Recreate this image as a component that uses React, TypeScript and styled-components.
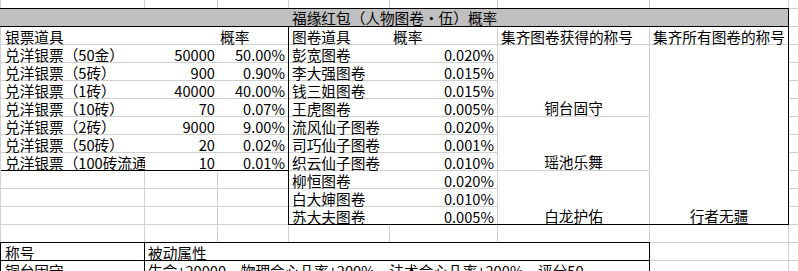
import styled, { createGlobalStyle } from 'styled-components'

const GRID = '#d0d0d0'
const INK = '#000'
const HEAD_FILL = '#c0c0c0'

// x positions of the sheet's vertical gridlines
const COLUMN_LINES = [0, 144, 217, 288, 389, 497, 649, 788]

const columnGradient =
  'linear-gradient(to right, ' +
  COLUMN_LINES.map((x, i) => {
    const next = COLUMN_LINES[i + 1]
    return `${GRID} ${x}px ${x + 1}px, transparent ${x + 1}px ${next !== undefined ? next + 'px' : '100%'}`
  }).join(', ') +
  ')'

const GlobalStyle = createGlobalStyle`
  html, body {
    margin: 0;
    padding: 0;
    background: #fff;
  }
  body {
    font-family: 'Noto Sans CJK SC', 'Noto Sans', sans-serif;
    font-size: 14.67px;
    color: ${INK};
  }
`

const Sheet = styled.div`
  display: grid;
  grid-template-columns: 145px 73px 71px 101px 108px 152px 139px 1fr;
  grid-template-rows: 9px repeat(15, 18px);
  width: 798px;
  height: 271px;
  overflow: hidden;
  background-color: #fff;
  background-image: ${columnGradient}, linear-gradient(to bottom, ${GRID} 0 1px, transparent 1px);
  background-size: 100% 100%, 100% 18px;
  background-position: 0 0, 0 8px;
  background-repeat: no-repeat, repeat-y;
`

const Text = styled.span`
  display: block;
  line-height: 17px;
  padding: 1px 3px 0;
  white-space: nowrap;
`

const Num = styled(Text)`
  text-align: right;
  padding: 1px 3px 0 0;
`

/* ---------- title bar ---------- */

const TitleBar = styled.div`
  grid-column: 1 / 8;
  grid-row: 2;
  display: grid;
  grid-template-columns: 289px 1fr;
  background: ${HEAD_FILL};
  border-right: 1px solid ${INK};
  border-bottom: 1px solid ${INK};
  box-shadow: 0 -1px 0 ${INK};
  box-sizing: border-box;
`

const TitleText = styled(Text)`
  grid-column: 2;
  padding-top: 0;
`

/* ---------- silver ticket table ---------- */

const TicketTable = styled.div`
  grid-column: 1 / 4;
  grid-row: 3 / 11;
  display: flex;
  flex-direction: column;
  background: #fff;
  border-left: 1px solid ${GRID};
  border-right: 1px solid ${INK};
  box-sizing: border-box;
`

const TicketRow = styled.div`
  display: grid;
  grid-template-columns: 144px 73px 1fr;
  height: 18px;
  box-sizing: border-box;
  border-bottom: 1px solid ${GRID};

  &:last-child {
    border-bottom-color: ${INK};
  }
`

const TicketName = styled(Text)`
  padding-left: 4px;
  overflow-x: clip;
`

const TicketHead = styled(Text)`
  padding-left: 2px;
`

/* ---------- scroll table ---------- */

const ScrollTable = styled.div`
  grid-column: 4 / 8;
  grid-row: 3 / 14;
  display: grid;
  grid-template-columns: 209px 152px 1fr;
  grid-template-rows: 18px 1fr;
  background: #fff;
  border-right: 1px solid ${INK};
  border-bottom: 1px solid ${INK};
  box-shadow: -1px 0 0 ${INK};
  box-sizing: border-box;
`

const HeadCell = styled.div<{ $divider?: boolean }>`
  box-sizing: border-box;
  border-bottom: 1px solid ${GRID};
  border-right: ${(p) => (p.$divider ? `1px solid ${GRID}` : 'none')};
`

const SplitHead = styled(HeadCell)`
  display: grid;
  grid-template-columns: 101px 1fr;
`

const ScrollList = styled.div`
  display: flex;
  flex-direction: column;
  border-right: 1px solid ${GRID};
`

const ScrollRow = styled.div`
  display: grid;
  grid-template-columns: 101px 1fr;
  height: 18px;
  flex: none;
  box-sizing: border-box;
  border-bottom: 1px solid ${GRID};

  &:last-child {
    border-bottom: none;
    height: 17px;
  }
`

const TitleColumn = styled.div`
  display: flex;
  flex-direction: column;
  border-right: 1px solid ${GRID};
`

const TitleGroup = styled.div<{ $rows: number }>`
  display: flex;
  align-items: flex-end;
  justify-content: center;
  height: ${(p) => p.$rows * 18}px;
  flex: none;
  box-sizing: border-box;
  border-bottom: 1px solid ${GRID};

  &:last-child {
    flex: 1;
    height: auto;
    border-bottom: none;
  }
`

const AllTitle = styled.div`
  display: flex;
  align-items: flex-end;
  justify-content: center;
`

/* ---------- passive table ---------- */

const PassiveTable = styled.div`
  grid-column: 1 / 7;
  grid-row: 15 / 17;
  display: flex;
  flex-direction: column;
  background: #fff;
  border-left: 1px solid ${INK};
  border-right: 1px solid ${INK};
  box-shadow: 0 -1px 0 ${INK};
  box-sizing: border-box;
`

const PassiveRow = styled.div`
  display: grid;
  grid-template-columns: 144px 1fr;
  height: 18px;
  box-sizing: border-box;
  border-bottom: 1px solid ${INK};
`

const PassiveKey = styled(Text)`
  padding-left: 4px;
  border-right: 1px solid ${INK};
`

const tickets = [
  ['兑洋银票（50金）', '50000', '50.00%'],
  ['兑洋银票（5砖）', '900', '0.90%'],
  ['兑洋银票（1砖）', '40000', '40.00%'],
  ['兑洋银票（10砖）', '70', '0.07%'],
  ['兑洋银票（2砖）', '9000', '9.00%'],
  ['兑洋银票（50砖）', '20', '0.02%'],
  ['兑洋银票（100砖流通）', '10', '0.01%'],
]

const scrolls = [
  ['彭宽图卷', '0.020%'],
  ['李大强图卷', '0.015%'],
  ['钱三姐图卷', '0.015%'],
  ['王虎图卷', '0.005%'],
  ['流风仙子图卷', '0.020%'],
  ['司巧仙子图卷', '0.001%'],
  ['织云仙子图卷', '0.010%'],
  ['柳恒图卷', '0.020%'],
  ['白大婶图卷', '0.010%'],
  ['苏大夫图卷', '0.005%'],
]

const groups = [
  { title: '铜台固守', rows: 4 },
  { title: '瑶池乐舞', rows: 3 },
  { title: '白龙护佑', rows: 3 },
]

const passives = [
  ['称号', '被动属性'],
  ['铜台固守', '生命+20000，物理会心几率+200%，法术会心几率+200%，评分50'],
]

const App = () => {
  return (
    <>
      <GlobalStyle />
      <Sheet>
        <TitleBar>
          <TitleText>福缘红包（人物图卷·伍）概率</TitleText>
        </TitleBar>

        <TicketTable>
          <TicketRow>
            <TicketName>银票道具</TicketName>
            <span />
            <TicketHead>概率</TicketHead>
          </TicketRow>
          {tickets.map(([name, count, rate]) => (
            <TicketRow key={name}>
              <TicketName>{name}</TicketName>
              <Num>{count}</Num>
              <Num>{rate}</Num>
            </TicketRow>
          ))}
        </TicketTable>

        <ScrollTable>
          <SplitHead $divider>
            <Text>图卷道具</Text>
            <Text>概率</Text>
          </SplitHead>
          <HeadCell $divider>
            <Text>集齐图卷获得的称号</Text>
          </HeadCell>
          <HeadCell>
            <Text>集齐所有图卷的称号</Text>
          </HeadCell>

          <ScrollList>
            {scrolls.map(([name, rate]) => (
              <ScrollRow key={name}>
                <Text>{name}</Text>
                <Num>{rate}</Num>
              </ScrollRow>
            ))}
          </ScrollList>
          <TitleColumn>
            {groups.map((g) => (
              <TitleGroup key={g.title} $rows={g.rows}>
                <Text>{g.title}</Text>
              </TitleGroup>
            ))}
          </TitleColumn>
          <AllTitle>
            <Text>行者无疆</Text>
          </AllTitle>
        </ScrollTable>

        <PassiveTable>
          {passives.map(([key, value]) => (
            <PassiveRow key={key}>
              <PassiveKey>{key}</PassiveKey>
              <Text>{value}</Text>
            </PassiveRow>
          ))}
        </PassiveTable>
      </Sheet>
    </>
  )
}

export default App
